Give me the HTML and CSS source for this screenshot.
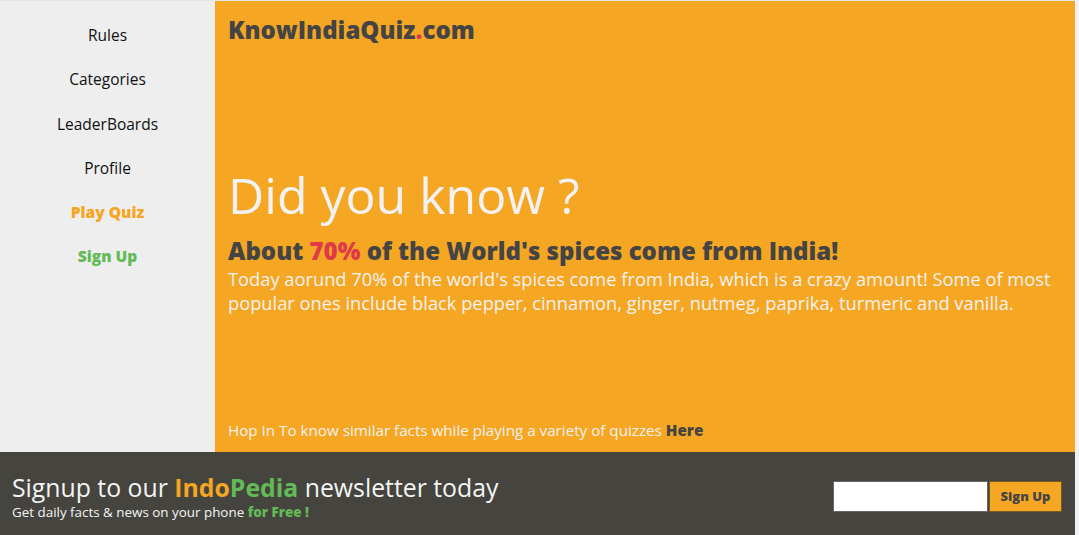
FILE: index.html
```html
<!DOCTYPE html>
<html>
<head>
<meta charset="utf-8">
<link rel="stylesheet" href="styles.css">
</head>
<body>
<div class="page">
  <div class="top">
    <nav class="sidebar">
      <a class="nav-item">Rules</a>
      <a class="nav-item">Categories</a>
      <a class="nav-item">LeaderBoards</a>
      <a class="nav-item">Profile</a>
      <a class="nav-item play">Play Quiz</a>
      <a class="nav-item signup">Sign Up</a>
    </nav>
    <main class="main">
      <div class="brand">KnowIndiaQuiz<span class="dot">.</span>com</div>
      <section class="fact">
        <h1 class="fact-title">Did you know ?</h1>
        <h2 class="fact-head">About <span class="pct">70%</span> of the World's spices come from India!</h2>
        <p class="fact-text">Today aorund 70% of the world's spices come from India, which is a crazy amount! Some of most popular ones include black pepper, cinnamon, ginger, nutmeg, paprika, turmeric and vanilla.</p>
      </section>
      <div class="hop">Hop In To know similar facts while playing a variety of quizzes <b class="here">Here</b></div>
    </main>
  </div>
  <footer class="footer">
    <div class="news">
      <div class="news-title">Signup to our <b class="indo">Indo</b><b class="pedia">Pedia</b> newsletter today</div>
      <div class="news-sub">Get daily facts &amp; news on your phone <b class="free">for Free !</b></div>
    </div>
    <form class="signup-form">
      <input class="email" type="text">
      <button class="btn" type="button">Sign Up</button>
    </form>
  </footer>
</div>
</body>
</html>
```
FILE: styles.css
```css
* { box-sizing: border-box; }
html, body { margin: 0; padding: 0; }
body {
  background: #f0f1f4;
  font-family: "Open Sans", "Noto Sans", sans-serif;
  width: 1079px;
  height: 535px;
  overflow: hidden;
}
.page {
  width: 1075px;
  display: flex;
  flex-direction: column;
}
.top {
  display: flex;
  height: 452px;
  border-top: 1px solid #e4e4e4;
}
.sidebar {
  width: 215px;
  background: #eeeeee;
  display: flex;
  flex-direction: column;
  align-items: center;
  padding-top: 24px;
}
.nav-item {
  display: block;
  font-size: 15.5px;
  line-height: 20px;
  height: 44.3px;
  color: #111;
  text-decoration: none;
}
.nav-item.play { color: #f5a623; font-weight: 800; }
.nav-item.signup { color: #62bb56; font-weight: 800; }
.main {
  flex: 1;
  background: #f5a623;
  padding: 14px 13px 12px;
  display: flex;
  flex-direction: column;
}
.brand {
  font-size: 24px;
  font-weight: 800;
  color: #444;
  line-height: 30px;
}
.brand .dot { color: #e03a4a; }
.fact {
  margin-top: 119px;
}
.fact-title {
  margin: 0;
  font-size: 50px;
  font-weight: 400;
  color: #f2f2f2;
  line-height: 62px;
}
.fact-head {
  margin: 10px 0 0;
  font-size: 24px;
  font-weight: 800;
  color: #444;
  line-height: 30px;
}
.fact-head .pct { color: #e03a4a; }
.fact-text {
  margin: 1px 0 0;
  font-size: 18.3px;
  line-height: 24px;
  color: #f5f2f0;
}
.hop {
  margin-top: auto;
  font-size: 15.2px;
  line-height: 20px;
  color: #f5f2f0;
}
.hop .here { color: #444; font-weight: 800; }
.footer {
  height: 83px;
  background: #46443e;
  display: flex;
  align-items: center;
  justify-content: space-between;
  padding: 4px 13px 0 12px;
}
.news-title {
  font-size: 24.8px;
  line-height: 32px;
  color: #f4f4f4;
}
.indo { color: #f5a623; font-weight: 700; }
.pedia { color: #62bb56; font-weight: 700; }
.news-sub {
  font-size: 13.4px;
  line-height: 18px;
  color: #f4f4f4;
}
.free { color: #62bb56; font-weight: 800; }
.signup-form {
  display: flex;
  gap: 1px;
  margin-top: 1px;
}
.email {
  width: 155px;
  height: 31px;
  border: 1px solid #666;
  background: #fff;
  margin: 0;
}
.btn {
  width: 73px;
  height: 31px;
  background: #f5a623;
  border: 1px solid #7a5a20;
  color: #444;
  font-family: "Open Sans", sans-serif;
  font-weight: 800;
  font-size: 13px;
  margin: 0;
  padding: 0;
}
```
